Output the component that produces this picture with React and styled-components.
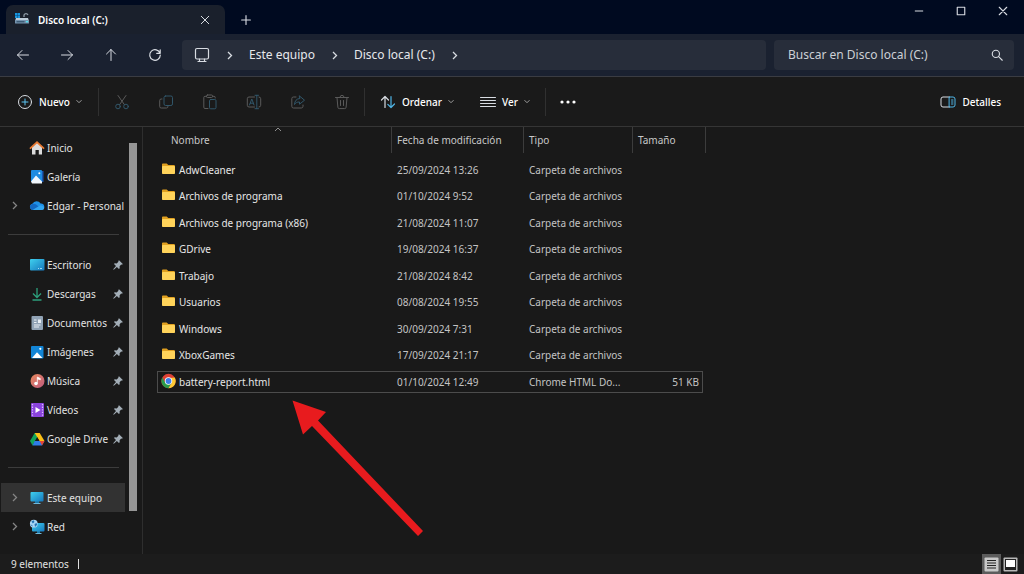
import React from "react";
import styled, { createGlobalStyle } from "styled-components";

const GlobalStyle = createGlobalStyle`
  * {
    box-sizing: border-box;
  }
  body {
    margin: 0;
    background: #191919;
    color: #e2e2e2;
    font-family: "Noto Sans", "Open Sans", sans-serif;
    font-size: 10px;
    line-height: 16px;
  }
  button,
  input {
    font: inherit;
    color: inherit;
    border: 0;
    padding: 0;
    background: none;
  }
  svg {
    display: block;
    flex-shrink: 0;
  }
`;

const Window = styled.div`
  display: flex;
  flex-direction: column;
  min-height: 100vh;
  position: relative;
`;

const TitleBar = styled.header`
  display: flex;
  align-items: flex-end;
  height: 34px;
  padding-left: 6px;
  background: #000a20;
`;

const Tab = styled.div`
  display: flex;
  align-items: center;
  width: 219px;
  height: 29px;
  padding: 0 11px 0 8px;
  gap: 8px;
  border-radius: 7px 7px 0 0;
  background: #1a202c;
`;

const TabTitle = styled.span`
  flex: 1;
  font-weight: 600;
  color: #fff;
`;

const IconButton = styled.button`
  display: flex;
  align-items: center;
  justify-content: center;
  width: ${(props) => props.$width || 44}px;
  height: ${(props) => props.$height || 28}px;
  opacity: ${(props) => (props.disabled ? 0.45 : 1)};
`;

const WindowControls = styled.div`
  display: flex;
  align-self: flex-start;
  margin-left: auto;
`;

const NavBar = styled.nav`
  display: flex;
  align-items: center;
  height: 43px;
  padding: 0 10px 0 1px;
  background: #1a2130;
  border-bottom: 1px solid #3a3c42;
`;

const AddressBar = styled.div`
  display: flex;
  align-items: center;
  flex: 1;
  height: 30px;
  margin: 0 8px 0 5px;
  padding-left: 12px;
  border-radius: 4px;
  background: #272d3a;
  font-size: 12px;
`;

const Crumb = styled.a`
  color: #e6e8ec;
  text-decoration: none;
`;

const CrumbArrow = styled.span`
  display: flex;
  justify-content: center;
  width: 39px;
`;

const SearchBox = styled.label`
  display: flex;
  align-items: center;
  width: 240px;
  height: 30px;
  padding: 0 11px 0 14px;
  border-radius: 4px;
  background: #272d3a;
  font-size: 12px;
`;

const SearchInput = styled.input`
  flex: 1;
  min-width: 0;
  outline: none;
  &::placeholder {
    color: #ccd0d6;
    opacity: 1;
  }
`;

const Toolbar = styled.div`
  display: flex;
  align-items: center;
  height: 50px;
  padding: 0 23px 0 17px;
  background: #1a1a1a;
  border-bottom: 1px solid #353535;
`;

const ToolButton = styled.button`
  display: flex;
  align-items: center;
  gap: 6px;
  width: ${(props) => props.$width};
  height: 32px;
  color: #fff;
  font-weight: 500;
`;

const Divider = styled.span`
  width: 1px;
  height: 28px;
  margin-right: ${(props) => props.$after || 0}px;
  background: #303030;
`;

const Spacer = styled.span`
  flex: 1;
`;

const Main = styled.div`
  display: flex;
  flex: 1;
`;

const Sidebar = styled.aside`
  display: flex;
  width: 143px;
  border-right: 1px solid #2e2e2e;
`;

const Places = styled.div`
  width: 125px;
  padding: 6px 0 0 1px;
`;

const Place = styled.a`
  display: flex;
  align-items: center;
  height: 29px;
  color: #e2e2e2;
  text-decoration: none;
  white-space: nowrap;
  background: ${(props) => (props.$selected ? "#323232" : "none")};
`;

const Expander = styled.span`
  display: flex;
  flex-shrink: 0;
  justify-content: center;
  width: 26px;
  margin-right: 2px;
`;

const PlaceIcon = styled.span`
  width: 16px;
  flex-shrink: 0;
  margin-right: 2px;
`;

const PlaceName = styled.span`
  flex: 1;
`;

const Pin = styled.span`
  padding-right: 2px;
`;

const Rule = styled.hr`
  height: 1px;
  margin: 14px 6px 15px 7px;
  border: 0;
  background: #3c3c3c;
`;

const ScrollTrack = styled.div`
  width: 8px;
  margin-left: 4px;
  padding-top: 16px;
`;

const ScrollThumb = styled.div`
  height: 368px;
  background: #969696;
`;

const Content = styled.main`
  flex: 1;
  padding-left: 14px;
`;

const FileTable = styled.table`
  width: 549px;
  table-layout: fixed;
  border-collapse: separate;
  border-spacing: 0;
`;

const HeadCell = styled.th`
  position: relative;
  height: 26px;
  padding: 0 0 0 ${(props) => props.$indent || 5}px;
  border-right: 1px solid #3c3c3c;
  color: #c8c8c8;
  font-weight: 400;
  text-align: left;
  white-space: nowrap;
`;

const SortMark = styled.span`
  position: absolute;
  top: 0;
  left: 50%;
`;

const Row = styled.tr`
  height: 27px;
  &:nth-child(even) {
    height: 26px;
  }
  &:first-child {
    height: 30px;
  }
  &:first-child td {
    padding-top: 3px;
  }
`;

const Cell = styled.td`
  padding: 0;
  color: ${(props) => (props.$name ? "#e6e6e6" : "#c4c4c4")};
  white-space: nowrap;
`;

const CellBody = styled.div`
  display: flex;
  align-items: center;
  justify-content: ${(props) => (props.$right ? "flex-end" : "flex-start")};
  height: 22px;
  padding: 0 3px 0 ${(props) => (props.$name ? 4 : 5)}px;
  gap: 2px;
  border: 0 solid #4c4c4c;
  border-width: ${(props) => (props.$focused ? "1px 0" : "0")};
  ${(props) => props.$focused && props.$name && "border-left-width: 1px; padding-left: 3px;"}
  ${(props) => props.$focused && props.$right && "border-right-width: 1px;"}
`;

const StatusBar = styled.footer`
  display: flex;
  align-items: center;
  height: 20px;
  padding: 0 4px 0 11px;
  background: #1c1c1c;
`;

const StatusMark = styled.span`
  width: 1px;
  height: 10px;
  margin-left: 9px;
  background: #e0e0e0;
`;

const ViewButton = styled.button`
  display: flex;
  align-items: center;
  justify-content: center;
  width: 19px;
  height: 20px;
  background: ${(props) => (props.$active ? "#5c5c5c" : "none")};
`;

const PointerArrow = styled.svg`
  position: absolute;
  left: 292px;
  top: 400px;
  pointer-events: none;
`;

function Icon({ size = 16, color = "#d8dce2", width = 1, children }) {
  return (
    <svg
      width={size}
      height={size}
      viewBox="0 0 16 16"
      fill="none"
      stroke={color}
      strokeWidth={width}
      strokeLinecap="round"
      strokeLinejoin="round"
      aria-hidden="true"
    >
      {children}
    </svg>
  );
}

const Chevron = ({ color = "#d8dce2" }) => (
  <svg width="7" height="9" viewBox="0 0 7 9" fill="none" stroke={color} strokeWidth="1.3" aria-hidden="true">
    <path d="M2 1l3.5 3.5L2 8" />
  </svg>
);

const ChevronDown = () => (
  <svg width="6" height="5" viewBox="0 0 6 5" fill="none" stroke="#a0a0a0" aria-hidden="true">
    <path d="M.5 1.2L3 3.7l2.5-2.5" />
  </svg>
);

const toolIcons = [
  {
    label: "Cortar",
    art: (
      <>
        <path d="M4 1.5l6.3 9M12 1.5l-6.3 9" stroke="#a8a8a8" />
        <circle cx="4" cy="12.5" r="2.3" />
        <circle cx="12" cy="12.5" r="2.3" />
      </>
    ),
  },
  {
    label: "Copiar",
    art: (
      <>
        <rect x="6" y="2" width="8.5" height="9.5" rx="1.6" />
        <path d="M4 5H3.2A1.5 1.5 0 0 0 1.7 6.5v6A1.5 1.5 0 0 0 3.2 14h5.3A1.5 1.5 0 0 0 10 12.5" stroke="#a8a8a8" />
      </>
    ),
  },
  {
    label: "Pegar",
    art: (
      <>
        <path d="M6 14.5H3A1.2 1.2 0 0 1 1.8 13.3V3.5A1.2 1.2 0 0 1 3 2.3h1.5M10.5 2.3H12a1.2 1.2 0 0 1 1.2 1.2V4" stroke="#a8a8a8" />
        <rect x="4.5" y="1" width="6" height="2.5" rx="1" stroke="#a8a8a8" />
        <rect x="7.5" y="5.5" width="6.5" height="9.3" rx="1.2" />
      </>
    ),
  },
  {
    label: "Cambiar nombre",
    art: (
      <>
        <path d="M8.5 3H3a1.7 1.7 0 0 0-1.7 1.7v6.6A1.7 1.7 0 0 0 3 13h5.5M13 3a1.7 1.7 0 0 1 1.7 1.7v6.6A1.7 1.7 0 0 1 13 13" stroke="#a8a8a8" />
        <path d="M9 1.3h3.5M9 14.7h3.5M10.8 1.3v13.4M3.5 11l2.3-6L8 11M4.3 9.2h3" />
      </>
    ),
  },
  {
    label: "Compartir",
    art: (
      <>
        <path d="M6 3H3.5A1.7 1.7 0 0 0 1.8 4.7v7.6A1.7 1.7 0 0 0 3.5 14h7.8a1.7 1.7 0 0 0 1.7-1.7V11" stroke="#a8a8a8" />
        <path d="M9.5 2l5 4.2-5 4V8C7 7.8 5.5 9 4.5 10.5 4.7 7 6.5 4.7 9.5 4.5z" />
      </>
    ),
  },
  {
    label: "Eliminar",
    art: (
      <path
        d="M1.5 3.5h13M6 3.3a2 2 0 0 1 4 0M3 3.7l.9 9.6a1.4 1.4 0 0 0 1.4 1.3h5.4a1.4 1.4 0 0 0 1.4-1.3l.9-9.6M6.5 6.5v5M9.5 6.5v5"
        stroke="#a8a8a8"
      />
    ),
  },
];

function Art({ children }) {
  return (
    <svg width="16" height="16" viewBox="0 0 16 16" aria-hidden="true">
      {children}
    </svg>
  );
}

const placeArt = {
  home: (
    <>
      <path d="M3 7l5-4.500L13 7v7.500H9.800V10H6.500v4.500H3z" fill="#dcdcdc" />
      <path d="M1.5 8.2L8 2.2l6.5 6" fill="none" stroke="#e87830" strokeWidth="1.8" strokeLinecap="round" />
    </>
  ),
  gallery: (
    <>
      <path d="M5 2h9.5v11H5z" fill="#1a56b0" />
      <rect x="2" y="1" width="11" height="12" rx="1" fill="#1d8be0" />
      <path d="M2 12.5L7 6.5l6 6v2H3z" fill="#f1f7fc" />
      <circle cx="10.3" cy="4.3" r="1" fill="#fff" />
    </>
  ),
  cloud: (
    <>
      <path d="M4 12a3.2 3.2 0 0 1-.6-6.3A4.7 4.7 0 0 1 11.6 5.5 3.3 3.3 0 0 1 12.7 12z" fill="#1e90e6" />
      <path d="M1 8C2.8 5 5.5 5.5 7.5 6.7L13 11.8 4 12A3.2 3.2 0 0 1 1 8z" fill="#1268c3" />
      <path d="M3.5 12l7-4.2c2-1 4.7.2 4.7 2.2a2.2 2.2 0 0 1-2.2 2z" fill="#32a5f0" />
    </>
  ),
  desktop: (
    <>
      <rect x="1" y="2" width="14.5" height="11.5" rx="1" fill="url(#aqua)" />
      <path d="M11 11.5h2M9 11.5h1" stroke="#bff0ff" strokeWidth=".8" />
    </>
  ),
  download: (
    <path d="M8 2v9M4 7.5L8 11.5l4-4M3.5 14h9" fill="none" stroke="#2d9f7c" strokeWidth="1.3" />
  ),
  document: (
    <>
      <rect x="2.5" y="1" width="11.5" height="14" rx="1" fill="#91a3b5" />
      <path d="M5 5h2.5M5 7.5h2.5M5 10h6.5M5 12h5" stroke="#e8eef4" />
      <path d="M9 4.5h3v3.5H9z" fill="#e8eef4" />
    </>
  ),
  picture: (
    <>
      <rect x="2" y="2" width="12.5" height="12.5" rx="1" fill="#1285d6" />
      <path d="M3 14L8 8.3l5.5 5.7z" fill="#fff" />
      <circle cx="11.3" cy="4.8" r="1.1" fill="#fff" />
    </>
  ),
  music: (
    <>
      <circle cx="8.5" cy="8" r="7" fill="url(#rose)" />
      <circle cx="7" cy="10.5" r="1.8" fill="#fff" />
      <path d="M8.3 10.5V4l3 1.5v1.3L8.8 6" fill="#fff" stroke="#fff" strokeWidth=".7" />
    </>
  ),
  video: (
    <>
      <rect x="2" y="1" width="13" height="14" rx="1" fill="#8a43dc" />
      <path d="M3.5 2v12M13.5 2v12" stroke="#d9c0ff" strokeWidth="1.2" strokeDasharray="1.3 1.3" />
      <path d="M6.5 5l5 3-5 3z" fill="#fff" />
    </>
  ),
  drive: (
    <>
      <path d="M5.7 2h5L6 10.5 3.5 14.5 1 10z" fill="#12a55b" />
      <path d="M5.7 2h5L15.5 10h-5z" fill="#fcc015" />
      <path d="M5.7 10h9.8L13 14.5H3.5z" fill="#2f7de8" />
      <path d="M10.7 10h4.8L13 14.5z" fill="#e94435" />
      <path d="M8.2 6.3L10.4 10H6z" fill="#191919" />
    </>
  ),
  computer: (
    <>
      <path d="M6 11h4v2.5H6z" fill="#1b77a8" />
      <path d="M4.5 13h7v1h-7z" fill="#6fb8da" />
      <rect x="1.5" y="2" width="13" height="9.5" rx="1" fill="url(#aqua)" />
    </>
  ),
  network: (
    <>
      <path d="M8 12h3v2H8z" fill="#1b77a8" />
      <path d="M6.5 14h6v1h-6z" fill="#6fb8da" />
      <rect x="3" y="4" width="12.5" height="8.5" rx="1" fill="url(#aqua)" />
      <circle cx="4.8" cy="4.7" r="3.9" fill="#a8d6f4" />
      <path d="M2.5 2.5l2-1.2 1 1.7-1.7 1.5zM5.5 5l2-1 .7 1.7L6 8zM1.2 5.5l2 .5.5 1.8z" fill="#2674b3" />
    </>
  ),
};

const FolderIcon = () => (
  <svg width="16" height="18" viewBox="0 0 16 18" aria-hidden="true">
    <path d="M1 3.5A.9.9 0 0 1 1.9 2.6h3.8L7.3 4H13a.9.9 0 0 1 .9.9V6H1z" fill="#e0a020" />
    <rect x="1" y="5" width="13" height="8" rx=".8" fill="#ffd35a" />
  </svg>
);

const ChromeIcon = () => (
  <svg width="16" height="18" viewBox="0 0 16 18" aria-hidden="true">
    <circle cx="7.5" cy="8" r="7.2" fill="#dd4034" />
    <path d="M1.3 4.4A7.2 7.2 0 0 0 7.5 15.2L10.9 9.7 7.5 8 4.3 9.6z" fill="#2b9b4b" />
    <path d="M13.8 4.5A7.2 7.2 0 0 1 7.5 15.2L10.8 9.7 9 5z" fill="#fcc934" />
    <circle cx="7.5" cy="8" r="3.7" fill="#fff" />
    <circle cx="7.5" cy="8" r="2.9" fill="#3b7de9" />
  </svg>
);

const DiskIcon = () => (
  <svg width="16" height="16" viewBox="0 0 16 16" aria-hidden="true">
    <path d="M1 1h5v5H1z" fill="#1796de" />
    <path d="M3.5 1v5M1 3.5h5" stroke="#0b4f87" strokeWidth=".6" />
    <path d="M10 5V3a2.2 2.2 0 0 1 4 0" fill="none" stroke="#8d99a5" strokeWidth="1.3" />
    <path d="M2 6h12l1 3H1z" fill="#bdcbd8" />
    <rect x="1" y="8" width="14" height="3.5" rx=".6" fill="#7795b0" />
    <path d="M2.5 9.8h8" stroke="#26455f" />
    <rect x="12" y="9" width="2" height="1.3" fill="#54e3f0" />
  </svg>
);

const PinIcon = () => (
  <svg width="10" height="10" viewBox="0 0 10 10" aria-hidden="true">
    <path d="M6 .2L9.8 4l-.8.7-.8-.1L6.6 6.3l.1 2-.8.7-2-2L.8 9.8l-.6-.6 2.8-3.1-2-2 .7-.8 2 .1L5.4 1.8l-.1-.8z" fill="#a3aeb7" />
  </svg>
);

const places = [
  [
    { name: "Inicio", icon: "home" },
    { name: "Galería", icon: "gallery" },
    { name: "Edgar - Personal", icon: "cloud", expandable: true },
  ],
  [
    { name: "Escritorio", icon: "desktop", pinned: true },
    { name: "Descargas", icon: "download", pinned: true },
    { name: "Documentos", icon: "document", pinned: true },
    { name: "Imágenes", icon: "picture", pinned: true },
    { name: "Música", icon: "music", pinned: true },
    { name: "Vídeos", icon: "video", pinned: true },
    { name: "Google Drive", icon: "drive", pinned: true },
  ],
  [
    { name: "Este equipo", icon: "computer", expandable: true, selected: true },
    { name: "Red", icon: "network", expandable: true },
  ],
];

const folder = "Carpeta de archivos";

const files = [
  { name: "AdwCleaner", date: "25/09/2024 13:26", type: folder },
  { name: "Archivos de programa", date: "01/10/2024 9:52", type: folder },
  { name: "Archivos de programa (x86)", date: "21/08/2024 11:07", type: folder },
  { name: "GDrive", date: "19/08/2024 16:37", type: folder },
  { name: "Trabajo", date: "21/08/2024 8:42", type: folder },
  { name: "Usuarios", date: "08/08/2024 19:55", type: folder },
  { name: "Windows", date: "30/09/2024 7:31", type: folder },
  { name: "XboxGames", date: "17/09/2024 21:17", type: folder },
  {
    name: "battery-report.html",
    date: "01/10/2024 12:49",
    type: "Chrome HTML Do...",
    size: "51 KB",
    focused: true,
  },
];

function FileRow({ file }) {
  const { name, date, type, size, focused } = file;
  return (
    <Row>
      <Cell $name>
        <CellBody $name $focused={focused}>
          {size ? <ChromeIcon /> : <FolderIcon />}
          {name}
        </CellBody>
      </Cell>
      <Cell>
        <CellBody $focused={focused}>{date}</CellBody>
      </Cell>
      <Cell>
        <CellBody $focused={focused}>{type}</CellBody>
      </Cell>
      <Cell>
        <CellBody $right $focused={focused}>
          {size}
        </CellBody>
      </Cell>
      <Cell />
    </Row>
  );
}

function Header() {
  return (
    <>
      <TitleBar>
        <Tab>
          <DiskIcon />
          <TabTitle>Disco local (C:)</TabTitle>
          <IconButton $width={18} aria-label="Cerrar pestaña">
            <Icon size={10} width={1.6}>
              <path d="M2 2l12 12M14 2L2 14" />
            </Icon>
          </IconButton>
        </Tab>
        <IconButton $width={42} aria-label="Nueva pestaña">
          <Icon size={10} width={1.8}>
            <path d="M8 1v14M1 8h14" />
          </Icon>
        </IconButton>
        <WindowControls>
          <IconButton $width={42} $height={22} aria-label="Minimizar">
            <Icon size={10} width={1.6}>
              <path d="M2 8h12" />
            </Icon>
          </IconButton>
          <IconButton $width={42} $height={22} aria-label="Maximizar">
            <Icon size={10} width={1.8}>
              <path d="M2 2h12v12H2z" />
            </Icon>
          </IconButton>
          <IconButton $width={42} $height={22} aria-label="Cerrar">
            <Icon size={10} width={1.8}>
              <path d="M2 2l12 12M14 2L2 14" />
            </Icon>
          </IconButton>
        </WindowControls>
      </TitleBar>
      <NavBar>
        <IconButton aria-label="Atrás">
          <Icon>
            <path d="M2.5 8h11M7 3.5L2.5 8 7 12.5" />
          </Icon>
        </IconButton>
        <IconButton aria-label="Adelante">
          <Icon>
            <path d="M2.5 8h11M9 3.5L13.5 8 9 12.5" />
          </Icon>
        </IconButton>
        <IconButton aria-label="Subir">
          <Icon>
            <path d="M8 13.5v-11M3.5 7L8 2.5 12.5 7" />
          </Icon>
        </IconButton>
        <IconButton aria-label="Actualizar">
          <Icon width={1.2}>
            <path d="M13 6.2A5.3 5.3 0 1 0 13.3 8M13.2 2.8v3.5H9.7" />
          </Icon>
        </IconButton>
        <AddressBar>
          <Icon width={1.2}>
            <rect x="1.5" y="1.5" width="13" height="10.5" rx="1.5" />
            <path d="M5.5 12v2.3M10.5 12v2.3M4 14.5h8" />
          </Icon>
          <CrumbArrow>
            <Chevron />
          </CrumbArrow>
          <Crumb href="#equipo">Este equipo</Crumb>
          <CrumbArrow>
            <Chevron />
          </CrumbArrow>
          <Crumb href="#disco">Disco local (C:)</Crumb>
          <CrumbArrow>
            <Chevron />
          </CrumbArrow>
        </AddressBar>
        <SearchBox>
          <SearchInput type="text" aria-label="Buscar" placeholder="Buscar en Disco local (C:)" />
          <Icon size={12} width={1.5}>
            <circle cx="6.5" cy="6.5" r="4.8" />
            <path d="M10.2 10.2l4.8 4.8" />
          </Icon>
        </SearchBox>
      </NavBar>
    </>
  );
}

function Commands() {
  return (
    <Toolbar>
      <ToolButton $width="81px">
        <Icon>
          <circle cx="8" cy="8" r="6.5" />
          <path d="M8 5v6M5 8h6" stroke="#5cc3f0" />
        </Icon>
        Nuevo
        <ChevronDown />
      </ToolButton>
      <Divider $after={1} />
      {toolIcons.map((tool) => (
        <IconButton key={tool.label} aria-label={tool.label} disabled>
          <Icon color="#4d9fca">{tool.art}</Icon>
        </IconButton>
      ))}
      <Divider $after={15} />
      <ToolButton $width="100px">
        <Icon width={1.2}>
          <path d="M5 13.5v-11M1.5 6L5 2.5 8.5 6" />
          <path d="M11 2.5v11M7.8 10.3l3.2 3.2 3.5-3.5" stroke="#4fb5e6" />
        </Icon>
        Ordenar
        <ChevronDown />
      </ToolButton>
      <ToolButton $width="65px">
        <Icon>
          <path d="M.5 3.5h15M.5 6.5h15M.5 9.5h15M.5 12.5h15" />
        </Icon>
        Ver
        <ChevronDown />
      </ToolButton>
      <Divider />
      <IconButton aria-label="Más opciones">
        <svg width="16" height="4" viewBox="0 0 16 4" fill="#fff" aria-hidden="true">
          <circle cx="2" cy="2" r="1.6" />
          <circle cx="8" cy="2" r="1.6" />
          <circle cx="14" cy="2" r="1.6" />
        </svg>
      </IconButton>
      <Spacer />
      <ToolButton>
        <Icon>
          <path d="M9.5 3H3a2 2 0 0 0-2 2v6a2 2 0 0 0 2 2h6.5" />
          <path d="M9.5 3H13a2 2 0 0 1 2 2v6a2 2 0 0 1-2 2H9.5zM11.5 6h1.5M11.5 8h1.5M11.5 10h1.5" stroke="#4fb5e6" />
        </Icon>
        Detalles
      </ToolButton>
    </Toolbar>
  );
}

function App() {
  return (
    <Window>
      <GlobalStyle />
      <Header />
      <Commands />
      <Main>
        <Sidebar>
          <Places>
            {places.map((group, i) => (
              <React.Fragment key={i}>
                {i > 0 && <Rule />}
                {group.map((place) => (
                  <Place key={place.name} href="#" $selected={place.selected}>
                    <Expander>{place.expandable && <Chevron color="#858585" />}</Expander>
                    <PlaceIcon>
                      <Art>{placeArt[place.icon]}</Art>
                    </PlaceIcon>
                    <PlaceName>{place.name}</PlaceName>
                    {place.pinned && (
                      <Pin>
                        <PinIcon />
                      </Pin>
                    )}
                  </Place>
                ))}
              </React.Fragment>
            ))}
          </Places>
          <ScrollTrack>
            <ScrollThumb />
          </ScrollTrack>
        </Sidebar>
        <Content>
          <FileTable>
            <colgroup>
              <col width="235" />
              <col width="132" />
              <col width="109" />
              <col width="70" />
              <col width="3" />
            </colgroup>
            <thead>
              <tr>
                <HeadCell $indent={14}>
                  Nombre
                  <SortMark>
                    <svg width="8" height="5" viewBox="0 0 8 5" fill="none" stroke="#909090" aria-hidden="true">
                      <path d="M1 4l3-3 3 3" />
                    </svg>
                  </SortMark>
                </HeadCell>
                <HeadCell>Fecha de modificación</HeadCell>
                <HeadCell>Tipo</HeadCell>
                <HeadCell colSpan={2}>Tamaño</HeadCell>
              </tr>
            </thead>
            <tbody>
              {files.map((file) => (
                <FileRow key={file.name} file={file} />
              ))}
            </tbody>
          </FileTable>
        </Content>
      </Main>
      <StatusBar>
        9 elementos
        <StatusMark />
        <Spacer />
        <ViewButton $active aria-label="Detalles">
          <svg width="15" height="15" viewBox="0 0 15 15" aria-hidden="true">
            <rect x=".5" y=".5" width="14" height="14" rx="1" fill="#c8c8c8" />
            <path d="M3 3.5h9M3 6h9M3 8.5h9M3 11h9" stroke="#222" strokeWidth="1.2" />
          </svg>
        </ViewButton>
        <ViewButton aria-label="Iconos grandes">
          <svg width="15" height="15" viewBox="0 0 15 15" aria-hidden="true">
            <rect x=".5" y=".5" width="14" height="14" rx="1" fill="#b8b8b8" />
            <rect x="2" y="2" width="11" height="11" fill="#222" />
            <rect x="3" y="3" width="9" height="7" fill="#fff" />
          </svg>
        </ViewButton>
      </StatusBar>
      <PointerArrow width="134" height="138" viewBox="0 0 134 138" fill="#e81b1e" aria-hidden="true">
        <defs>
          <linearGradient id="aqua" x1="0" y1="0" x2="1" y2="1">
            <stop offset="0" stopColor="#3fd0ee" />
            <stop offset="1" stopColor="#1677bd" />
          </linearGradient>
          <linearGradient id="rose" x1="0" y1="0" x2="1" y2="1">
            <stop offset="0" stopColor="#e88a5c" />
            <stop offset="1" stopColor="#bf5a80" />
          </linearGradient>
        </defs>
        <path d="M.5.5L34 12l-8 8.5L131 131l-5 5L20 26l-9 8.5z" />
      </PointerArrow>
    </Window>
  );
}

export default App;
